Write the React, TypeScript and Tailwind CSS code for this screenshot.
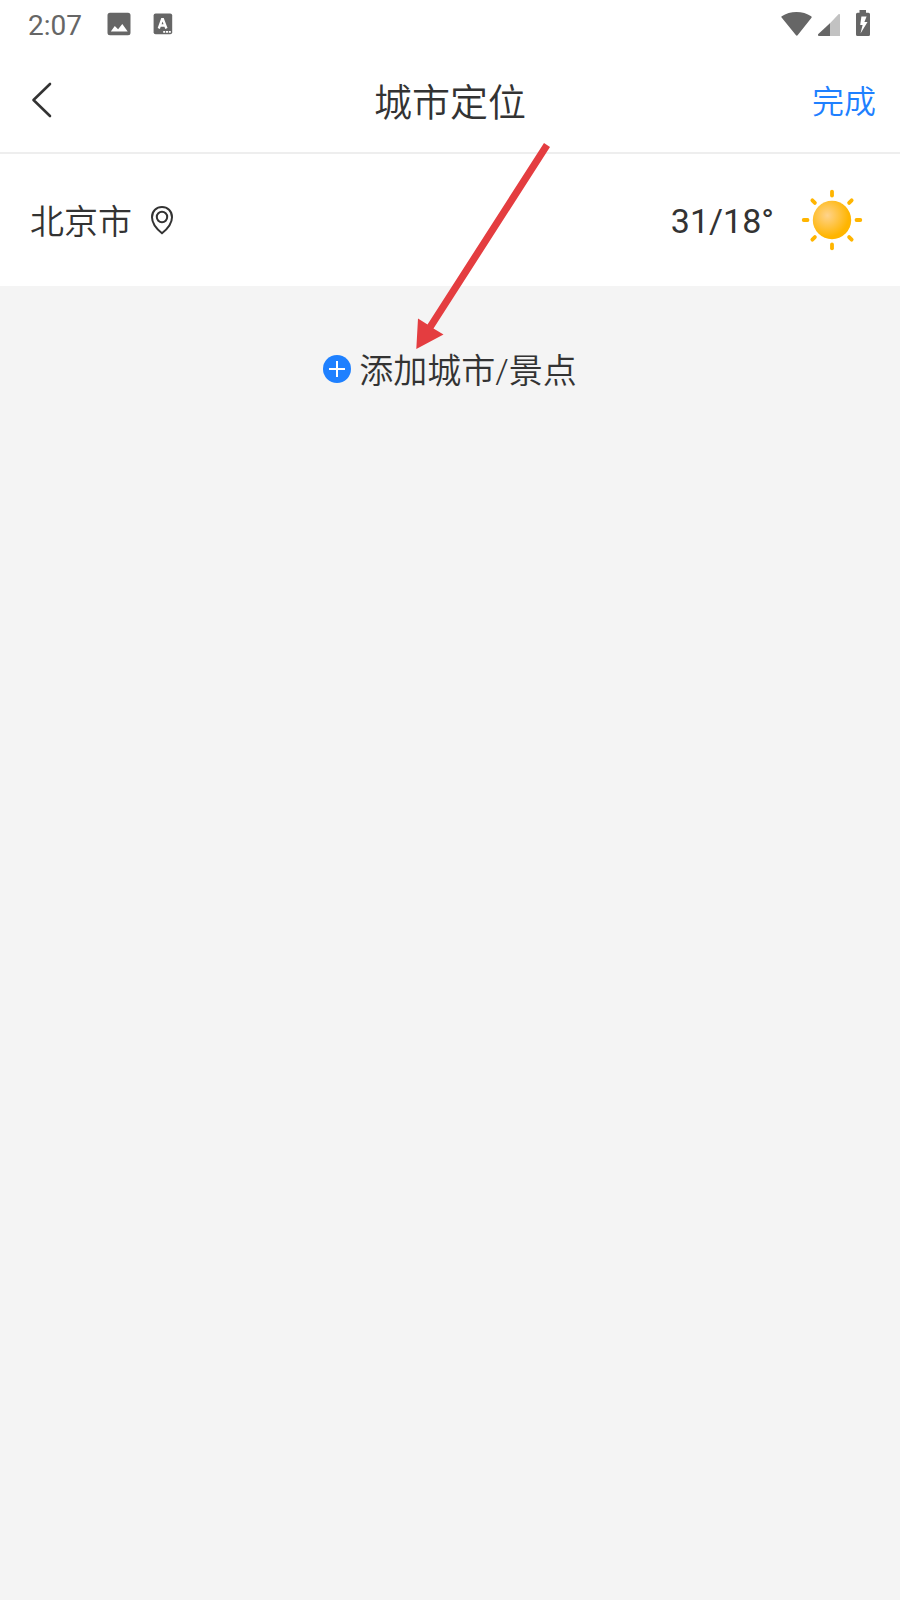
import React from "react";

function StatusBar() {
  return (
    <div className="flex h-12 items-center justify-between pl-7 pr-[29px] text-[#666666]">
      <div className="flex items-center">
        <span className="w-[79px] pt-[3px] text-[28px] leading-none">2:07</span>
        <svg width="24" height="24" viewBox="0 0 24 24" fill="currentColor">
          <path
            fillRule="evenodd"
            d="M3 .7h18a2.5 2.5 0 0 1 2.5 2.5v17.6a2.5 2.5 0 0 1-2.5 2.5H3a2.5 2.5 0 0 1-2.5-2.5V3.2A2.5 2.5 0 0 1 3 .7zM3.800 19.500h16.900l-5.400-7.500-4.200 5.200-3.300-3.200z"
          />
        </svg>
        <svg
          className="ml-[22px]"
          width="20"
          height="22"
          viewBox="0 0 20 22"
          fill="currentColor"
        >
          <rect x=".6" y=".5" width="18.600" height="20.700" rx="2" />
          <path
            d="M5.800 15.500 9.100 6.200h.8L13.400 15.500M7.200 12.500h4.900"
            fill="none"
            stroke="#fff"
            strokeWidth="2.400"
          />
          <path d="M10.200 18h2v1.800h-2zM13 18h2v1.800h-2zM15.800 18h2v1.800h-2z" fill="#fff" />
        </svg>
      </div>
      <div className="flex items-center">
        <svg width="32" height="26" viewBox="0 0 32 26" fill="currentColor">
          <path d="M.6 6.600C.2 6.300.3 5.600.7 5.300 9-.6 22-.6 30.200 5.300c.5.300.6 1 .3 1.500L16.800 24.100a1.200 1.200 0 0 1-2 0z" />
        </svg>
        <svg className="ml-[5px]" width="23" height="26" viewBox="0 0 23 26">
          <path d="M22 3v22H2.300a1 1 0 0 1-.7-1.700L20.500 3.300c.6-.6 1.500-.3 1.500.3z" fill="#c2c2c2" />
          <path d="M12 12.200V25H1c-1.200 0-1.500-1-.7-1.900z" fill="currentColor" />
        </svg>
        <svg
          className="ml-[14px]"
          width="16"
          height="28"
          viewBox="0 0 16 28"
          fill="currentColor"
        >
          <path
            fillRule="evenodd"
            d="M4.500 0h6.500v2.700h2.500a1.500 1.500 0 0 1 1.500 1.500v20.300a1.500 1.500 0 0 1-1.500 1.500h-11A1.500 1.500 0 0 1 1 24.500V4.200a1.500 1.500 0 0 1 1.500-1.500h2zM6.400 6.500 5.200 15h2.400L5.500 23.500l7-11.500H9.400l2.200-5.500z"
          />
        </svg>
      </div>
    </div>
  );
}

function Header() {
  return (
    <header className="grid h-[106px] grid-cols-[1fr_auto_1fr] items-center border-b-2 border-[#eeeeee] px-6">
      <button className="ml-1.5 w-6" aria-label="返回">
        <svg width="24" height="36" viewBox="0 0 24 36" fill="none">
          <path
            d="M20 2 3.500 18 20 34"
            stroke="#333333"
            strokeWidth="2.600"
            strokeLinecap="round"
            strokeLinejoin="round"
          />
        </svg>
      </button>
      <h1 className="pt-1.5 text-[38px] font-[350] leading-none">城市定位</h1>
      <button className="justify-self-end pt-[3px] text-[32px] font-[350] leading-none text-[#1e80ff]">
        完成
      </button>
    </header>
  );
}

function SunIcon() {
  const angles = [0, 45, 90, 135, 180, 225, 270, 315];
  return (
    <svg width="64" height="64" viewBox="0 0 64 64">
      <defs>
        <radialGradient id="sun" cx=".38" cy=".38" r=".56">
          <stop offset="0" stopColor="#ffd38b" />
          <stop offset="1" stopColor="#ffb500" />
        </radialGradient>
      </defs>
      <circle cx="32" cy="32" r="19.200" fill="url(#sun)" />
      {angles.map((angle) => (
        <path
          key={angle}
          d={angle % 90 ? "M32 4.200v3.600" : "M32 3.700v3.800"}
          transform={`rotate(${angle} 32 32)`}
          stroke="#ffb500"
          strokeWidth="3.800"
          strokeLinecap="round"
        />
      ))}
    </svg>
  );
}

function CityRow() {
  return (
    <div className="flex h-[132px] items-center justify-between bg-white pl-[30px] pr-9">
      <div className="flex items-center">
        <span className="pt-[3px] text-[34px] font-[350] leading-none">北京市</span>
        <svg className="ml-[18px]" width="24" height="30" viewBox="0 0 24 30" fill="none">
          <path
            d="M12 28.200C8 25 2 18.500 2 12.200 2 6 6.500 2 12 2s10 4 10 10.200C22 18.500 16 25 12 28.200z"
            stroke="#333333"
            strokeWidth="2"
          />
          <circle cx="12" cy="12" r="5.200" stroke="#333333" strokeWidth="2" />
        </svg>
      </div>
      <div className="flex items-center">
        <span className="pt-0.5 text-[34px] leading-none">31/18°</span>
        <div className="ml-[26px]">
          <SunIcon />
        </div>
      </div>
    </div>
  );
}

function AddCity() {
  return (
    <button className="mt-[64px] flex w-full items-center justify-center">
      <svg width="28" height="28" viewBox="0 0 28 28">
        <circle cx="14" cy="14" r="14" fill="#1e80ff" />
        <path d="M14 6v16M6 14h16" stroke="#fff" strokeWidth="2" />
      </svg>
      <span className="ml-2 pt-1 text-[34px] font-[350] leading-none">添加城市/景点</span>
    </button>
  );
}

export default function App() {
  return (
    <div className="relative h-[1600px] w-[900px] overflow-hidden bg-[#f4f4f4] font-[Roboto,'Noto_Sans_CJK_SC',sans-serif] text-[#333333]">
      <div className="bg-white">
        <StatusBar />
        <Header />
      </div>
      <CityRow />
      <AddCity />

      {/* Arrow pointing at the add button */}
      <svg
        className="pointer-events-none absolute left-[400px] top-[130px]"
        width="160"
        height="230"
        viewBox="0 0 160 230"
        fill="#e43d40"
      >
        <path d="M144 13 150 17 33.500 198.500 43.500 204.500 16.300 219 18 188.500 27.500 194.500z" />
      </svg>
    </div>
  );
}
